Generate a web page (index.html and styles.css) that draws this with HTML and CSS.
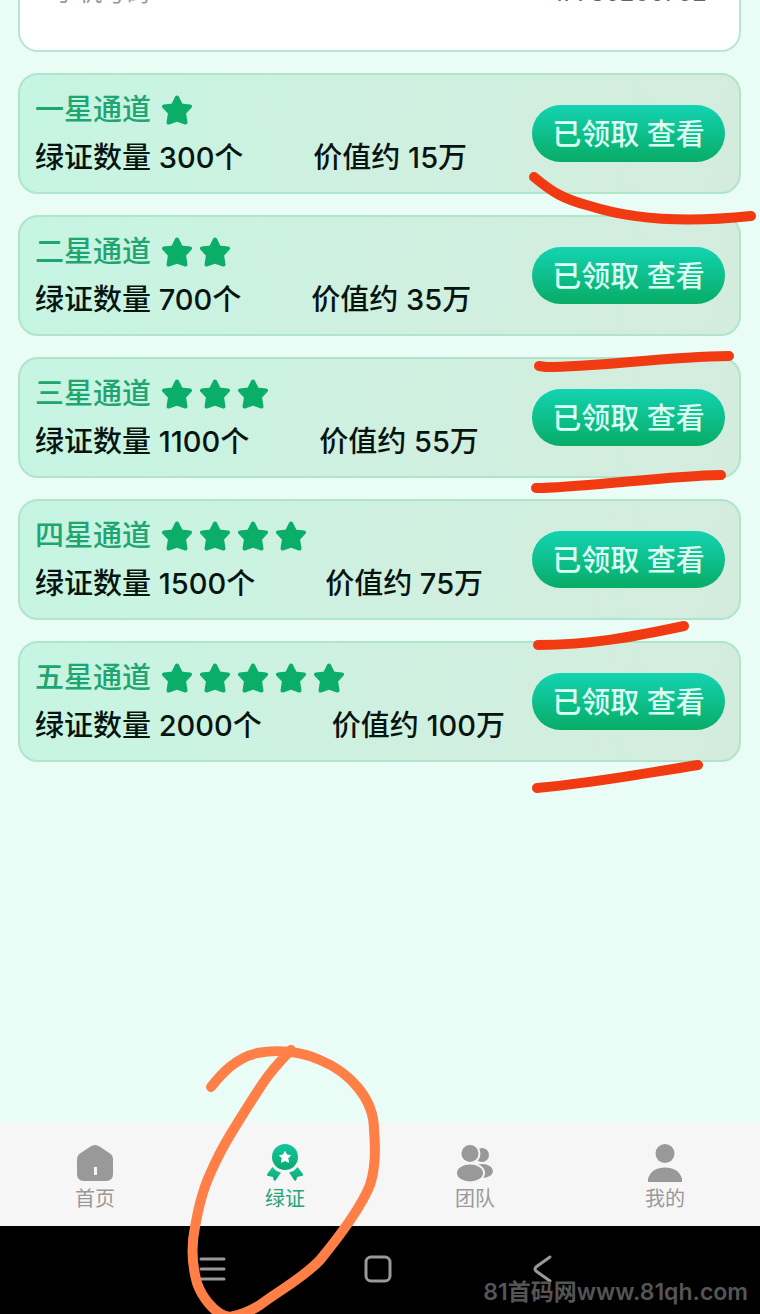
FILE: index.html
```html
<!DOCTYPE html>
<html lang="zh-CN">
<head>
    <meta charset="UTF-8">
    <meta name="viewport" content="width=device-width, initial-scale=1.0">
    <title>绿证</title>
    <link rel="stylesheet" href="styles.css">
</head>
<body>

    <!-- shared shapes -->
    <svg class="defs" aria-hidden="true">
        <defs>
            <symbol id="star" viewBox="0 0 30 30">
                <path d="M15 2.500 L19 10.500 L28 11.500 L22 18 L23.500 27.500 L15 24.500 L6.500 27.500 L8 18 L2 11.500 L11 10.500 Z" fill="currentColor" stroke="currentColor" stroke-width="4" stroke-linejoin="round"/>
            </symbol>
            <linearGradient id="medal" x1="0" y1="0" x2="0" y2="1">
                <stop offset="0" stop-color="#12c79c"/>
                <stop offset="1" stop-color="#0ba871"/>
            </linearGradient>
        </defs>
    </svg>

    <main class="content">
        <section class="profile">
            <div class="profile-row">
                <span class="label">手机号码</span>
                <span class="phone">17786206752</span>
            </div>
        </section>

        <section class="card">
            <div class="info">
                <h2 class="title">一星通道
                    <span class="stars"><svg><use href="#star"/></svg></span>
                </h2>
                <p class="detail"><span>绿证数量 300个</span><span>价值约 15万</span></p>
            </div>
            <button class="view">已领取 查看</button>
        </section>

        <section class="card">
            <div class="info">
                <h2 class="title">二星通道
                    <span class="stars"><svg><use href="#star"/></svg><svg><use href="#star"/></svg></span>
                </h2>
                <p class="detail"><span>绿证数量 700个</span><span>价值约 35万</span></p>
            </div>
            <button class="view">已领取 查看</button>
        </section>

        <section class="card">
            <div class="info">
                <h2 class="title">三星通道
                    <span class="stars"><svg><use href="#star"/></svg><svg><use href="#star"/></svg><svg><use href="#star"/></svg></span>
                </h2>
                <p class="detail"><span>绿证数量 1100个</span><span>价值约 55万</span></p>
            </div>
            <button class="view">已领取 查看</button>
        </section>

        <section class="card">
            <div class="info">
                <h2 class="title">四星通道
                    <span class="stars"><svg><use href="#star"/></svg><svg><use href="#star"/></svg><svg><use href="#star"/></svg><svg><use href="#star"/></svg></span>
                </h2>
                <p class="detail"><span>绿证数量 1500个</span><span>价值约 75万</span></p>
            </div>
            <button class="view">已领取 查看</button>
        </section>

        <section class="card">
            <div class="info">
                <h2 class="title">五星通道
                    <span class="stars"><svg><use href="#star"/></svg><svg><use href="#star"/></svg><svg><use href="#star"/></svg><svg><use href="#star"/></svg><svg><use href="#star"/></svg></span>
                </h2>
                <p class="detail"><span>绿证数量 2000个</span><span>价值约 100万</span></p>
            </div>
            <button class="view">已领取 查看</button>
        </section>
    </main>

    <nav class="tabbar">
        <a href="#home" class="tab">
            <svg viewBox="0 0 40 40">
                <path d="M15.500 3.500 Q20 0.500 24.500 3.500 L35 10.500 Q38 12.500 38 16.500 V31 Q38 38 31 38 H9 Q2 38 2 31 V16.500 Q2 12.500 5 10.500 Z" fill="#999"/>
                <rect x="19" y="24" width="3" height="8" fill="#f6f6f6"/>
            </svg>
            <span>首页</span>
        </a>
        <a href="#cert" class="tab active">
            <svg viewBox="0 0 40 40">
                <g fill="url(#medal)">
                    <circle cx="20" cy="14" r="13"/>
                    <path d="M7.500 24 Q11 28.500 16 29.500 L10.500 37.500 Q9 38.500 8.500 36.500 L8 34 L3.500 33 Q1 32.500 2.500 30.500 Z"/>
                    <path d="M32.500 24 Q29 28.500 24 29.500 L29.500 37.500 Q31 38.500 31.500 36.500 L32 34 L36.500 33 Q39 32.500 37.500 30.500 Z"/>
                </g>
                <path d="M20 8.500 L21.800 12 L25.500 12.600 L22.800 15.300 L23.500 19.300 L20 17.500 L16.500 19.300 L17.200 15.300 L14.500 12.600 L18.200 12 Z" fill="#fff" stroke="#fff" stroke-linejoin="round"/>
            </svg>
            <span>绿证</span>
        </a>
        <a href="#team" class="tab">
            <svg viewBox="0 0 40 40">
                <g fill="#999">
                    <circle cx="27" cy="12" r="7"/>
                    <ellipse cx="27" cy="28" rx="11" ry="7"/>
                    <g stroke="#f6f6f6" stroke-width="4" paint-order="stroke">
                        <circle cx="15" cy="10.500" r="8.500"/>
                        <ellipse cx="15" cy="30" rx="13" ry="8.500"/>
                    </g>
                </g>
            </svg>
            <span>团队</span>
        </a>
        <a href="#mine" class="tab">
            <svg viewBox="0 0 40 40">
                <g fill="#999">
                    <circle cx="20" cy="10.500" r="9.500"/>
                    <path d="M3 39 V36 C5 28 12 24.500 20 24.500 S35 28 37 36 V39 Z"/>
                </g>
            </svg>
            <span>我的</span>
        </a>
    </nav>

    <footer class="sysbar">
        <button class="sys" aria-label="菜单">
            <svg viewBox="0 0 30 30"><path d="M3 4 H26 M3 14 H26 M3 24 H26"/></svg>
        </button>
        <button class="sys" aria-label="主页">
            <svg viewBox="0 0 30 30"><rect x="3" y="2" width="24" height="24" rx="5"/></svg>
        </button>
        <button class="sys" aria-label="返回">
            <svg viewBox="0 0 30 30"><path d="M22 2 L8 12 Q6 14 8 16 L22 26"/></svg>
        </button>
    </footer>

    <!-- hand drawn marks -->
    <svg class="marks" viewBox="0 0 760 1314" aria-hidden="true">
        <g stroke="#f13a12" stroke-width="10">
            <path d="M534 177 C552 192 563 199 590 206 C640 222 695 222 751 216"/>
            <path d="M539 366 L546 367 C600 367 660 357 729 356"/>
            <path d="M536 488 L542 488 C600 486 665 476 721 475"/>
            <path d="M538 645 C590 645 632 637 684 626"/>
            <path d="M537 788 C595 783 640 774 698 765"/>
        </g>
        <path stroke="#ff7f47" stroke-width="10" d="M211 1087 C222 1073 236 1058 257 1053 C279 1049 302 1052 320 1060 C349 1072 374 1098 374 1130 C376 1152 375 1170 370 1185 C360 1210 338 1238 320 1260 C303 1278 280 1290 260 1305 Q246 1314 230 1317 C214 1315 201 1295 197 1283 C192 1265 191 1246 195 1227 C201 1192 208 1177 220 1153 C231 1132 250 1103 263 1083 Q274 1067 291 1050"/>
    </svg>

    <div class="watermark">81首码网www.81qh.com</div>

</body>
</html>
```

FILE: styles.css
```css
* {
    padding: 0;
    margin: 0;
    box-sizing: border-box;
}

body {
    position: relative;
    min-height: 100vh;
    display: flex;
    flex-direction: column;
    font-family: Inter, "Noto Sans CJK SC", sans-serif;
    background-color: #e9fdf6;
    overflow-x: hidden;
}

.defs {
    position: absolute;
    width: 0;
    height: 0;
}

.content {
    flex: 1;
    display: flex;
    flex-direction: column;
    gap: 21px;
    padding: 0 19px 0 18px;
}

.profile {
    height: 52px;
    padding: 0 32px 0 34px;
    background-color: white;
    border: 2px solid #b9e6d4;
    border-top: none;
    border-radius: 0 0 20px 20px;
}

.profile-row {
    height: 8px;
    display: flex;
    justify-content: space-between;
    align-items: flex-end;
    font-size: 24px;
    line-height: 30px;
}

.label {
    color: #999;
}

.phone {
    color: #666;
}

.card {
    height: 121px;
    display: flex;
    justify-content: space-between;
    align-items: center;
    padding: 0 14px 0 15px;
    border: 2px solid #b0e4cb;
    border-radius: 20px;
    background: linear-gradient(100deg, #c6f5e3, #cff0e0 50%, #d4ecde);
}

.info {
    display: flex;
    flex-direction: column;
    gap: 8px;
}

.title {
    display: flex;
    align-items: center;
    gap: 11px;
    font-size: 29px;
    font-weight: 500;
    line-height: 40px;
    color: #1fa56f;
}

.stars {
    display: flex;
    gap: 8px;
    color: #0bae68;
}

.stars svg {
    width: 30px;
    height: 30px;
}

.detail {
    display: flex;
    gap: 70px;
    font-size: 29px;
    font-weight: 500;
    line-height: 40px;
    color: #08140f;
    white-space: nowrap;
}

.view {
    width: 193px;
    height: 57px;
    padding-bottom: 3px;
    border: none;
    border-radius: 29px;
    background: linear-gradient(#14d3b2, #08ac66);
    color: #dcfff4;
    font-family: inherit;
    font-size: 29px;
    font-weight: 500;
    white-space: nowrap;
}

.tabbar {
    height: 104px;
    display: flex;
    background-color: #f6f6f6;
}

.tab {
    flex: 1;
    display: flex;
    flex-direction: column;
    align-items: center;
    padding-top: 21px;
    font-size: 20px;
    line-height: 32px;
    color: #999;
    text-decoration: none;
}

.tab svg {
    width: 40px;
    height: 40px;
}

.active {
    color: #1fa576;
}

.sysbar {
    height: 88px;
    display: flex;
    justify-content: center;
    align-items: center;
    gap: 135px;
    padding-right: 5px;
    background-color: black;
}

.sys {
    width: 30px;
    height: 30px;
    border: none;
    background: none;
}

.sys svg {
    display: block;
    width: 30px;
    height: 30px;
    fill: none;
    stroke: #999;
    stroke-width: 3;
    stroke-linecap: round;
}

.marks {
    position: absolute;
    top: 0;
    left: 0;
    width: 100%;
    height: 100%;
    fill: none;
    stroke-linecap: round;
    stroke-linejoin: round;
    pointer-events: none;
}

.watermark {
    position: absolute;
    right: 12px;
    bottom: 6px;
    font-size: 23px;
    font-weight: 600;
    line-height: 32px;
    color: #555;
}
```
